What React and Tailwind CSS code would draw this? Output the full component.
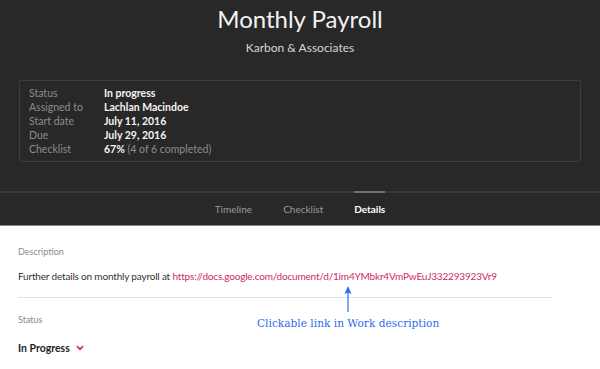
export default function App() {
  const rows = [
    { label: 'Status', value: 'In progress' },
    { label: 'Assigned to', value: 'Lachlan Macindoe' },
    { label: 'Start date', value: 'July 11, 2016' },
    { label: 'Due', value: 'July 29, 2016' },
  ];
  const tabs = ['Timeline', 'Checklist', 'Details'];

  return (
    <div className="relative w-[600px] h-[369px] overflow-hidden bg-white" style={{ fontFamily: 'Lato, "Open Sans", sans-serif' }}>
      {/* header */}
      <div className="bg-[#282828] pt-[5px]">
        <h1 className="text-center text-[24px] leading-[28px] text-[#f2f2f2]">Monthly Payroll</h1>
        <p className="mt-[7px] text-center text-[12px] leading-[16px] text-[#d6d6d6]">Karbon &amp; Associates</p>

        <div className="mx-[19px] mt-[24px] rounded-[2px] border border-[#3d3d3d] px-[9px] pt-[5px] pb-[5px]">
          {rows.map((r) => (
            <div key={r.label} className="grid grid-cols-[75px_1fr] text-[10.5px] leading-[14px]">
              <span className="text-[#8c8c8c]">{r.label}</span>
              <span className="font-bold text-[#f4f4f4]">{r.value}</span>
            </div>
          ))}
          <div className="grid grid-cols-[75px_1fr] text-[10.5px] leading-[14px]">
            <span className="text-[#8c8c8c]">Checklist</span>
            <span className="text-[#8c8c8c]">
              <span className="font-bold text-[#f4f4f4]">67%</span> (4 of 6 completed)
            </span>
          </div>
        </div>

        <div className="mt-[29px] border-t-2 border-[#383838]">
          <div className="flex justify-center gap-[31px] pb-[9px]">
            {tabs.map((t) => (
              <div
                key={t}
                className={t === 'Details'
                  ? 'relative -mt-[2px] pt-[11px] text-[10px] leading-[14px] font-bold text-white'
                  : 'relative -mt-[2px] pt-[11px] text-[10px] leading-[14px] text-[#9a9a9a]'}
              >
                {t === 'Details' && <div className="absolute left-0 right-0 top-0 h-[2px] bg-[#707070]" />}
                {t}
              </div>
            ))}
          </div>
        </div>
        <div className="h-[1px] bg-[#8a8a8a]" />
      </div>

      {/* details */}
      <div className="px-[18px] pt-[20px]">
        <p className="text-[9px] leading-[12px] text-[#8a8a8a]">Description</p>
        <p className="mt-[11px] text-[10px] leading-[14px] tracking-[-0.18px] text-[#333]">
          Further details on monthly payroll at{' '}
          <a className="text-[#cc2b5e]">https://docs.google.com/document/d/1im4YMbkr4VmPwEuJ332293923Vr9</a>
        </p>
        <div className="mt-[14px] w-[534px] h-[1px] bg-[#e3e3e3]" />
        <p className="mt-[16px] text-[9px] leading-[12px] text-[#8a8a8a]">Status</p>
        <div className="mt-[15px] flex items-center gap-[6px]">
          <span className="text-[10.5px] leading-[14px] font-bold text-[#222]">In Progress</span>
          <svg width="8" height="6" viewBox="0 0 8 6" fill="none">
            <path d="M1 1.2 L4 4.3 L7 1.2" stroke="#cc2b5e" strokeWidth="1.8" />
          </svg>
        </div>
      </div>

      {/* annotation */}
      <div className="absolute left-[344px] top-[286px]">
        <svg width="8" height="26" viewBox="0 0 8 26">
          <path d="M4 0 L7.5 8 L4 6.5 L0.5 8 Z" fill="#2d6cf0" />
          <path d="M4 6 L4 26" stroke="#2d6cf0" strokeWidth="1.2" />
        </svg>
      </div>
      <p className="absolute left-[257px] top-[316px] text-[10.6px] leading-[14px] text-[#2d6cf0]" style={{ fontFamily: '"DejaVu Serif", serif' }}>
        Clickable link in Work description
      </p>
    </div>
  );
}
